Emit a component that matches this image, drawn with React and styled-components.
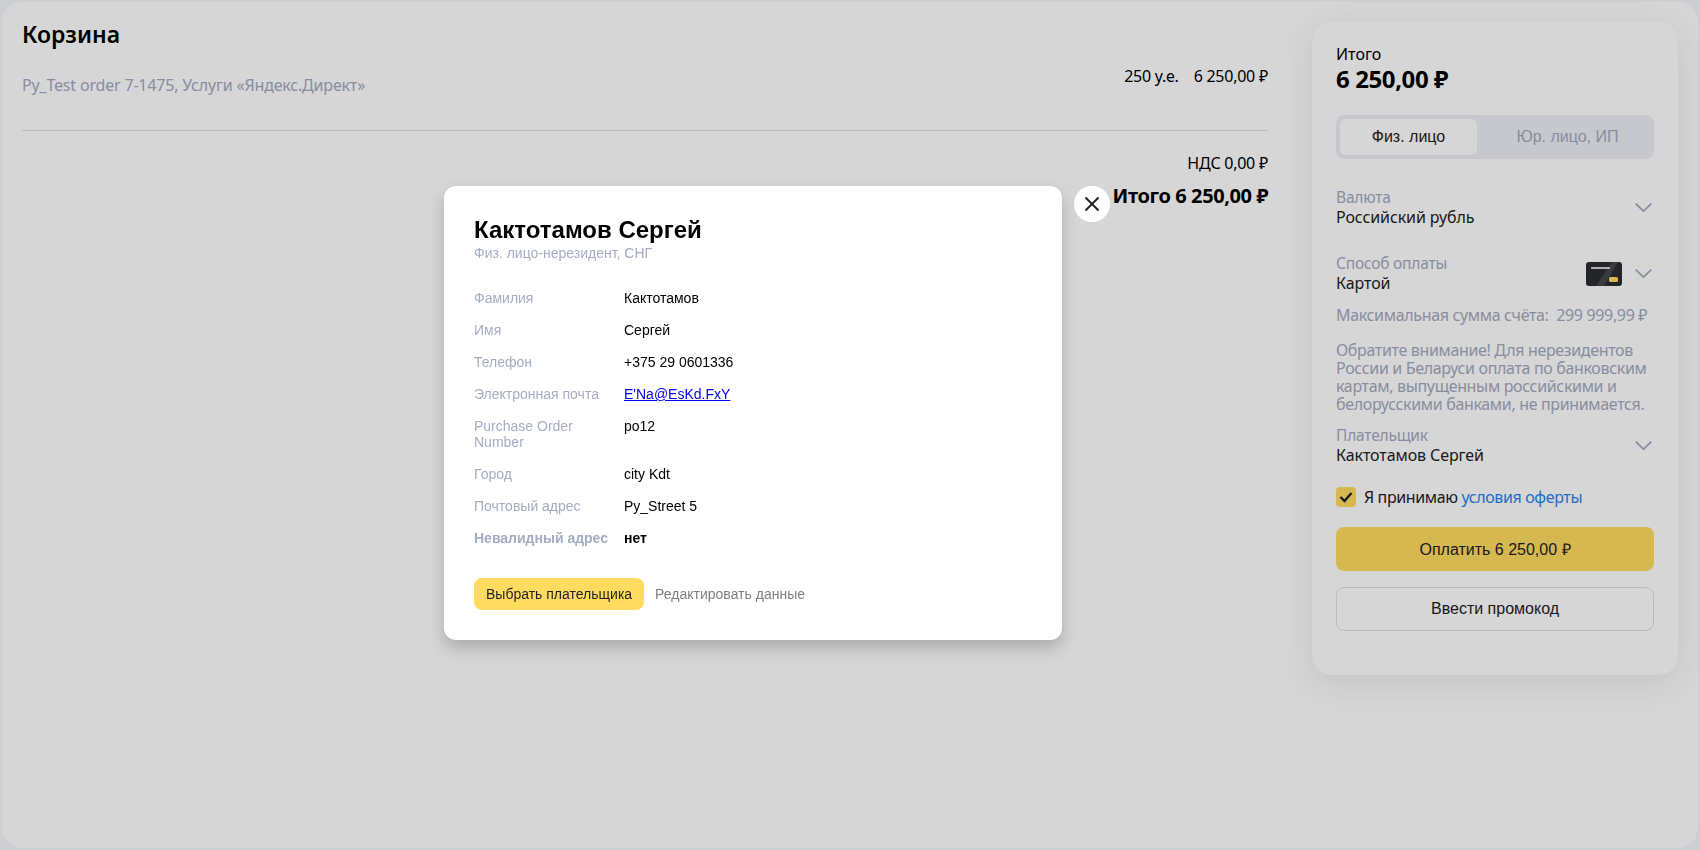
import React from "react";
import styled, { createGlobalStyle } from "styled-components";

const yaFont = `"Noto Sans", "Open Sans", sans-serif`;
const arial = `"Liberation Sans", Arial, sans-serif`;

const GlobalStyle = createGlobalStyle`
  html, body {
    margin: 0;
    height: 100%;
    background: #f4f6fa;
  }
  * {
    box-sizing: border-box;
  }
`;

const Page = styled.div`
  display: flex;
  gap: 44px;
  width: 1696px;
  height: 846px;
  margin: 2px;
  padding: 20px 20px 0 20px;
  background: #fff;
  border-radius: 20px;
  font-family: ${yaFont};
  color: #000;
  overflow: hidden;
`;

const Main = styled.div`
  flex: 0 0 1246px;
`;

const Title = styled.h1`
  margin: 0;
  font-size: 23px;
  line-height: 24px;
  font-weight: 600;
`;

const OrderRow = styled.div`
  display: flex;
  justify-content: space-between;
  margin-top: 20px;
  height: 65px;
  border-bottom: 1px solid #dcdeea;
  font-size: 16px;
`;

const OrderName = styled.div`
  margin-top: 8px;
  color: #a3a9be;
  letter-spacing: -0.18px;
`;

const OrderPrice = styled.div`
  display: flex;
  gap: 15px;
  font-size: 16px;
  line-height: 20px;
  letter-spacing: -0.25px;
`;

const Totals = styled.div`
  margin-top: 22px;
  text-align: right;
`;

const VatLine = styled.div`
  font-size: 16px;
  line-height: 20px;
  letter-spacing: -0.25px;
`;

const TotalLine = styled.div`
  margin-top: 11px;
  font-size: 20px;
  line-height: 24px;
  font-weight: 700;
  letter-spacing: -0.4px;
`;

const Sidebar = styled.aside`
  flex: 0 0 366px;
  height: 653px;
  padding: 22px 24px;
  background: #fff;
  border-radius: 20px;
  box-shadow: 0 8px 32px rgba(40, 50, 80, 0.1);
`;

const SumLabel = styled.div`
  font-size: 16px;
  line-height: 20px;
`;

const SumValue = styled.div`
  font-size: 24px;
  line-height: 30px;
  font-weight: 700;
  letter-spacing: -0.4px;
`;

const Tabs = styled.div`
  display: flex;
  height: 44px;
  margin-top: 21px;
  padding: 4px;
  background: #eeeff5;
  border-radius: 8px;
`;

const Tab = styled.div`
  flex: ${(p) => (p.$active ? "0 0 137px" : "1")};
  display: flex;
  align-items: center;
  justify-content: center;
  padding-left: ${(p) => (p.$active ? 0 : 8)}px;
  font-family: ${arial};
  font-size: 16px;
  border-radius: 6px;
  color: ${(p) => (p.$active ? "#1f2026" : "#a3a9be")};
  background: ${(p) => (p.$active ? "#fff" : "transparent")};
`;

const Select = styled.div`
  display: flex;
  align-items: center;
  justify-content: space-between;
  margin-top: ${(p) => p.$top}px;
  padding-right: 2px;
`;

const SelectText = styled.div`
  display: flex;
  flex-direction: column;
`;

const SelectLabel = styled.span`
  font-size: 15.5px;
  line-height: 19px;
  color: #a3a9be;
  letter-spacing: -0.2px;
`;

const SelectValue = styled.span`
  font-size: 16px;
  line-height: 20px;
  color: #1f2026;
  letter-spacing: -0.1px;
`;

const SelectIcons = styled.div`
  display: flex;
  align-items: center;
  gap: 13px;
`;

const Note = styled.div`
  margin-top: ${(p) => p.$top}px;
  font-size: 16px;
  line-height: 18px;
  color: #a3a9be;
  letter-spacing: -0.34px;
`;

const Agree = styled.div`
  display: flex;
  align-items: center;
  gap: 8px;
  margin-top: 21px;
  font-size: 16px;
  color: #1f2026;
  letter-spacing: -0.38px;
`;

const CheckBox = styled.span`
  display: flex;
  align-items: center;
  justify-content: center;
  width: 20px;
  height: 20px;
  border-radius: 4px;
  background: #ffdc60;
`;

const OfferLink = styled.span`
  color: #2b82ee;
`;

const PayButton = styled.div`
  display: flex;
  align-items: center;
  justify-content: center;
  height: 44px;
  margin-top: 19px;
  border-radius: 8px;
  background: #ffdc60;
  font-family: ${arial};
  font-size: 16px;
  color: #1f2026;
`;

const PromoButton = styled.div`
  display: flex;
  align-items: center;
  justify-content: center;
  height: 44px;
  margin-top: 16px;
  border: 1px solid #dcdeea;
  border-radius: 8px;
  font-family: ${arial};
  font-size: 16px;
  color: #1f2026;
`;

const Overlay = styled.div`
  position: fixed;
  inset: 0;
  background: rgba(0, 0, 0, 0.16);
`;

const Modal = styled.div`
  position: absolute;
  left: 444px;
  top: 186px;
  width: 618px;
  height: 454px;
  padding: 30px;
  background: #fff;
  border-radius: 12px;
  box-shadow: 0 8px 16px rgba(0, 0, 0, 0.2);
  font-family: ${arial};
`;

const CloseButton = styled.div`
  position: absolute;
  left: 630px;
  top: 0;
  display: flex;
  align-items: center;
  justify-content: center;
  width: 36px;
  height: 36px;
  border-radius: 50%;
  background: #fff;
`;

const ModalTitle = styled.h2`
  margin: 0;
  font-size: 24px;
  line-height: 28px;
  font-weight: 700;
`;

const ModalSub = styled.div`
  margin-top: 1px;
  font-size: 14px;
  line-height: 16px;
  color: #a5adc4;
`;

const Rows = styled.div`
  display: flex;
  flex-direction: column;
  gap: 16px;
  margin-top: 29px;
`;

const Row = styled.div`
  display: grid;
  grid-template-columns: 150px 1fr;
  font-size: 14px;
  line-height: 16px;
  font-weight: ${(p) => (p.$bold ? 700 : 400)};
`;

const RowLabel = styled.div`
  color: #a5adc4;
`;

const Mail = styled.a`
  color: #0000ee;
  text-decoration: underline;
`;

const ModalActions = styled.div`
  display: flex;
  align-items: center;
  gap: 11px;
  margin-top: 32px;
`;

const ChooseButton = styled.div`
  display: flex;
  align-items: center;
  height: 32px;
  padding: 0 12px;
  background: #ffdc60;
  border-radius: 8px;
  font-size: 14px;
  color: #1f2026;
`;

const EditLink = styled.div`
  font-size: 14px;
  color: #808080;
`;

const Chevron = () => (
  <svg width="17" height="9" viewBox="0 0 17 9" fill="none">
    <path d="M.7.7l7.8 7.4L16.3.7" stroke="#a3a9be" strokeWidth="1.8" />
  </svg>
);

const CardIcon = () => (
  <svg width="36" height="24" viewBox="0 0 36 24">
    <rect width="36" height="24" rx="3" fill="#2b2d31" />
    <path d="M10 24L26 0h6L18 24z" fill="#45474d" />
    <rect x="5" y="5" width="19" height="2" fill="#d0d0d0" />
    <rect x="23" y="15" width="9" height="5" rx="1.5" fill="#ffdc60" />
  </svg>
);

const rows = [
  ["Фамилия", "Кактотамов"],
  ["Имя", "Сергей"],
  ["Телефон", "+375 29 0601336"],
  ["Электронная почта", <Mail key="mail">E'Na@EsKd.FxY</Mail>],
  ["Purchase Order Number", "po12"],
  ["Город", "city Kdt"],
  ["Почтовый адрес", "Py_Street 5"],
];

export default function App() {
  return (
    <>
      <GlobalStyle />
      <Page>
        <Main>
          <Title>Корзина</Title>
          <OrderRow>
            <OrderName>Py_Test order 7-1475, Услуги «Яндекс.Директ»</OrderName>
            <OrderPrice>
              <span>250 у.е.</span>
              <span>6 250,00 ₽</span>
            </OrderPrice>
          </OrderRow>
          <Totals>
            <VatLine>НДС 0,00 ₽</VatLine>
            <TotalLine>Итого 6 250,00 ₽</TotalLine>
          </Totals>
        </Main>
        <Sidebar>
          <SumLabel>Итого</SumLabel>
          <SumValue>6 250,00 ₽</SumValue>
          <Tabs>
            <Tab $active>Физ. лицо</Tab>
            <Tab>Юр. лицо, ИП</Tab>
          </Tabs>
          <Select $top={29}>
            <SelectText>
              <SelectLabel>Валюта</SelectLabel>
              <SelectValue>Российский рубль</SelectValue>
            </SelectText>
            <Chevron />
          </Select>
          <Select $top={27}>
            <SelectText>
              <SelectLabel>Способ оплаты</SelectLabel>
              <SelectValue>Картой</SelectValue>
            </SelectText>
            <SelectIcons>
              <CardIcon />
              <Chevron />
            </SelectIcons>
          </Select>
          <Note $top={13}>Максимальная сумма счёта:&nbsp; 299 999,99 ₽</Note>
          <Note $top={17}>
            Обратите внимание! Для нерезидентов России и Беларуси оплата по банковским картам, выпущенным российскими и белорусскими банками, не принимается.
          </Note>
          <Select $top={13}>
            <SelectText>
              <SelectLabel>Плательщик</SelectLabel>
              <SelectValue>Кактотамов Сергей</SelectValue>
            </SelectText>
            <Chevron />
          </Select>
          <Agree>
            <CheckBox>
              <svg width="14" height="12" viewBox="0 0 14 12" fill="none">
                <path d="M1.5 6l4 4 7-8" stroke="#1f2026" strokeWidth="2.4" />
              </svg>
            </CheckBox>
            <span>
              Я принимаю <OfferLink>условия оферты</OfferLink>
            </span>
          </Agree>
          <PayButton>Оплатить 6 250,00 ₽</PayButton>
          <PromoButton>Ввести промокод</PromoButton>
        </Sidebar>
      </Page>
      <Overlay />
      <Modal>
        <CloseButton>
          <svg width="16" height="16" viewBox="0 0 16 16" fill="none">
            <path d="M1.5 1.5l13 13M14.5 1.5l-13 13" stroke="#1f2026" strokeWidth="1.9" />
          </svg>
        </CloseButton>
        <ModalTitle>Кактотамов Сергей</ModalTitle>
        <ModalSub>Физ. лицо-нерезидент, СНГ</ModalSub>
        <Rows>
          {rows.map(([label, value]) => (
            <Row key={label}>
              <RowLabel>{label}</RowLabel>
              <div>{value}</div>
            </Row>
          ))}
          <Row $bold>
            <RowLabel>Невалидный адрес</RowLabel>
            <div>нет</div>
          </Row>
        </Rows>
        <ModalActions>
          <ChooseButton>Выбрать плательщика</ChooseButton>
          <EditLink>Редактировать данные</EditLink>
        </ModalActions>
      </Modal>
    </>
  );
}
